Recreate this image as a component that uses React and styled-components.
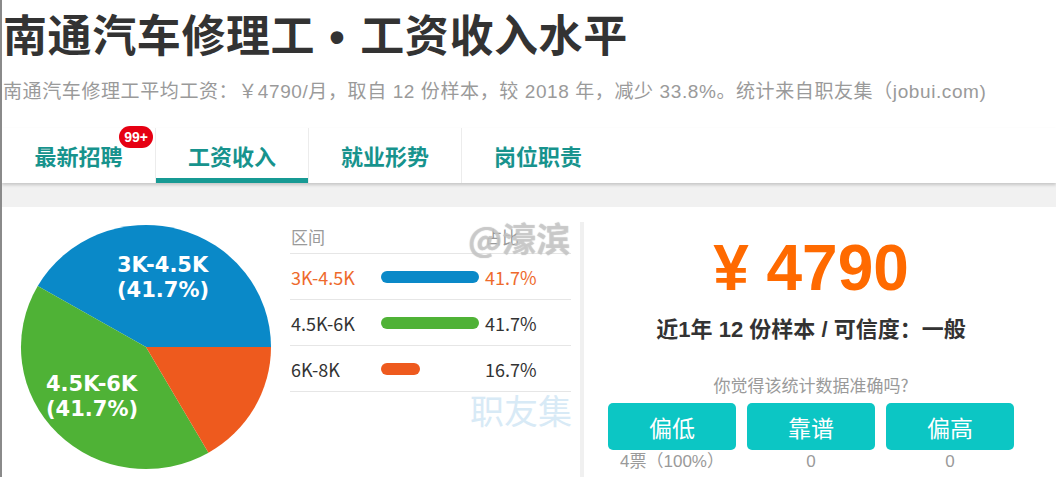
import React from "react";
import styled, { createGlobalStyle } from "styled-components";

const GlobalStyle = createGlobalStyle`
  body {
    margin: 0;
    background: #ffffff;
    font-family: "Liberation Sans", "Noto Sans CJK SC", sans-serif;
  }
`;

const Page = styled.div`
  position: relative;
  width: 1054px;
  height: 477px;
  overflow: hidden;
  border-left: 2px solid #8a8a8a;
  background: #ffffff;
`;

const Header = styled.div`
  padding: 3px 0 0 1px;
`;

const Title = styled.h1`
  margin: 0;
  height: 60px;
  font-family: "Noto Sans CJK SC", sans-serif;
  font-size: 44px;
  line-height: 60px;
  font-weight: 700;
  color: #333333;
  letter-spacing: 0.6px;
  white-space: nowrap;
`;

const Dot = styled.span`
  font-family: "Liberation Sans", sans-serif;
  line-height: 0;
  padding: 0 15px 0 14px;
`;

const Subtitle = styled.p`
  margin: 17px 0 0;
  font-size: 19px;
  line-height: 24px;
  color: #9a9a9a;
  letter-spacing: 0.6px;
  white-space: nowrap;
`;

const TabBar = styled.div`
  display: flex;
  height: 55px;
  margin-top: 24px;
  box-shadow: 0 2px 3px rgba(0, 0, 0, 0.18);
  position: relative;
  z-index: 1;
`;

const Tab = styled.div`
  position: relative;
  width: 153px;
  display: flex;
  align-items: center;
  justify-content: center;
  padding-bottom: 2px;
  box-sizing: border-box;
  font-family: "Noto Sans CJK SC", sans-serif;
  font-size: 22px;
  font-weight: 700;
  color: #17938d;
  border-left: ${(p) => (p.$first ? "none" : "1px solid #ececec")};
  box-shadow: ${(p) => (p.$active ? "inset 0 -5px 0 #179a94" : "none")};
`;

const Badge = styled.span`
  position: absolute;
  top: -2px;
  right: 2px;
  height: 22px;
  padding: 0 5px;
  border-radius: 11px;
  background: #e60012;
  color: #ffffff;
  font-family: "Liberation Sans", sans-serif;
  font-size: 14px;
  font-weight: 700;
  line-height: 22px;
`;

const Band = styled.div`
  height: 24px;
  background: #f1f1f1;
`;

const Content = styled.div`
  position: relative;
  display: flex;
  height: 270px;
`;

const PieBox = styled.div`
  width: 288px;
  flex-shrink: 0;
`;

const Table = styled.div`
  width: 281px;
  margin-top: 13px;
  font-family: "Noto Sans CJK SC", sans-serif;
`;

const HeadRow = styled.div`
  display: flex;
  height: 33px;
  align-items: center;
  font-size: 17px;
  color: #9a9a9a;
  border-bottom: 1px solid #e6e6e6;
`;

const Row = styled.div`
  display: flex;
  align-items: center;
  height: 45px;
  font-size: 18px;
  color: ${(p) => (p.$highlight ? "#ee6a2c" : "#333333")};
  border-bottom: 1px solid #e6e6e6;
`;

const Range = styled.span`
  width: 90px;
  padding-left: 1px;
`;

const BarCell = styled.span`
  width: 104px;
`;

const Bar = styled.span`
  display: block;
  height: 12px;
  border-radius: 6px;
  background: ${(p) => p.$color};
`;

const Side = styled.div`
  width: 454px;
  margin: 15px 0 0 9px;
  border-left: 4px solid #f0f0f0;
  display: flex;
  flex-direction: column;
  align-items: center;
`;

const Price = styled.div`
  margin-top: 12px;
  font-family: "Liberation Sans", sans-serif;
  font-size: 64px;
  line-height: 68px;
  font-weight: 700;
  color: #ff6a00;
`;

const Samples = styled.div`
  margin-top: 13px;
  font-size: 22px;
  line-height: 30px;
  font-weight: 700;
  color: #333333;
`;

const Question = styled.div`
  margin-top: 29px;
  font-family: "Noto Sans CJK SC", sans-serif;
  font-size: 17px;
  line-height: 22px;
  color: #9a9a9a;
`;

const Votes = styled.div`
  display: grid;
  grid-template-columns: repeat(3, 128px);
  column-gap: 11px;
  margin-top: 7px;
`;

const VoteButton = styled.button`
  height: 47px;
  border: none;
  border-radius: 5px;
  background: #0cc6c4;
  color: #ffffff;
  font-family: "Noto Sans CJK SC", sans-serif;
  font-size: 23px;
  cursor: pointer;
`;

const VoteCount = styled.div`
  margin-top: 2px;
  text-align: center;
  font-size: 17px;
  line-height: 20px;
  color: #9a9a9a;
`;

const Mark = styled.span`
  position: absolute;
  left: ${(p) => p.$x}px;
  top: ${(p) => p.$y}px;
  font-family: "Noto Sans CJK SC", sans-serif;
  font-size: ${(p) => p.$size}px;
  font-weight: ${(p) => p.$weight || 400};
  color: ${(p) => p.$color};
  text-shadow: ${(p) => p.$shadow || "none"};
  pointer-events: none;
  white-space: nowrap;
`;

const rows = [
  { range: "3K-4.5K", pct: 41.7, color: "#0a89c8", highlight: true },
  { range: "4.5K-6K", pct: 41.7, color: "#4fb236" },
  { range: "6K-8K", pct: 16.7, color: "#ee5a1e" },
];

function Pie() {
  return (
    <svg width="288" height="270" viewBox="2 0 288 270">
      <path d="M146 140 L271 140 A125 122 0 0 0 37.75 79 Z" fill="#0a89c8" />
      <path d="M146 140 L37.75 79 A125 122 0 0 0 208.5 245.7 Z" fill="#4fb236" />
      <path d="M146 140 L208.5 245.7 A125 122 0 0 0 271 140 Z" fill="#ee5a1e" />
      <g fill="#ffffff" fontFamily="DejaVu Sans, sans-serif" fontWeight="700" fontSize="21">
        <text x="117" y="65">3K-4.5K</text>
        <text x="117" y="90">(41.7%)</text>
        <text x="46" y="184">4.5K-6K</text>
        <text x="46" y="209">(41.7%)</text>
      </g>
    </svg>
  );
}

export default function App() {
  const tabs = ["最新招聘", "工资收入", "就业形势", "岗位职责"];
  return (
    <Page>
      <GlobalStyle />
      <Header>
        <Title>
          南通汽车修理工<Dot>•</Dot>工资收入水平
        </Title>
        <Subtitle>
          南通汽车修理工平均工资：￥4790/月，取自 12 份样本，较 2018 年，减少 33.8%。统计来自职友集（jobui.com)
        </Subtitle>
      </Header>
      <TabBar>
        {tabs.map((t, i) => (
          <Tab key={t} $first={i === 0} $active={i === 1}>
            {t}
            {i === 0 && <Badge>99+</Badge>}
          </Tab>
        ))}
      </TabBar>
      <Band />
      <Content>
        <PieBox>
          <Pie />
        </PieBox>
        <Table>
          <HeadRow>
            <Range>区间</Range>
            <BarCell />
            <span>占比</span>
          </HeadRow>
          {rows.map((r) => (
            <Row key={r.range} $highlight={r.highlight}>
              <Range>{r.range}</Range>
              <BarCell>
                <Bar $color={r.color} style={{ width: `${r.pct * 2.35}px` }} />
              </BarCell>
              <span>{r.pct}%</span>
            </Row>
          ))}
        </Table>
        <Side>
          <Price>¥ 4790</Price>
          <Samples>近1年 12 份样本 / 可信度：一般</Samples>
          <Question>你觉得该统计数据准确吗?</Question>
          <Votes>
            <VoteButton>偏低</VoteButton>
            <VoteButton>靠谱</VoteButton>
            <VoteButton>偏高</VoteButton>
            <VoteCount>4票（100%）</VoteCount>
            <VoteCount>0</VoteCount>
            <VoteCount>0</VoteCount>
          </Votes>
        </Side>
        <Mark
          $x={466}
          $y={6}
          $size={34}
          $weight={700}
          $color="rgba(205,205,205,0.7)"
          $shadow="0 0 1px rgba(150,150,150,0.6)"
        >
          @濠滨
        </Mark>
        <Mark $x={468} $y={178} $size={34} $color="#d8eaf6">
          职友集
        </Mark>
      </Content>
    </Page>
  );
}
